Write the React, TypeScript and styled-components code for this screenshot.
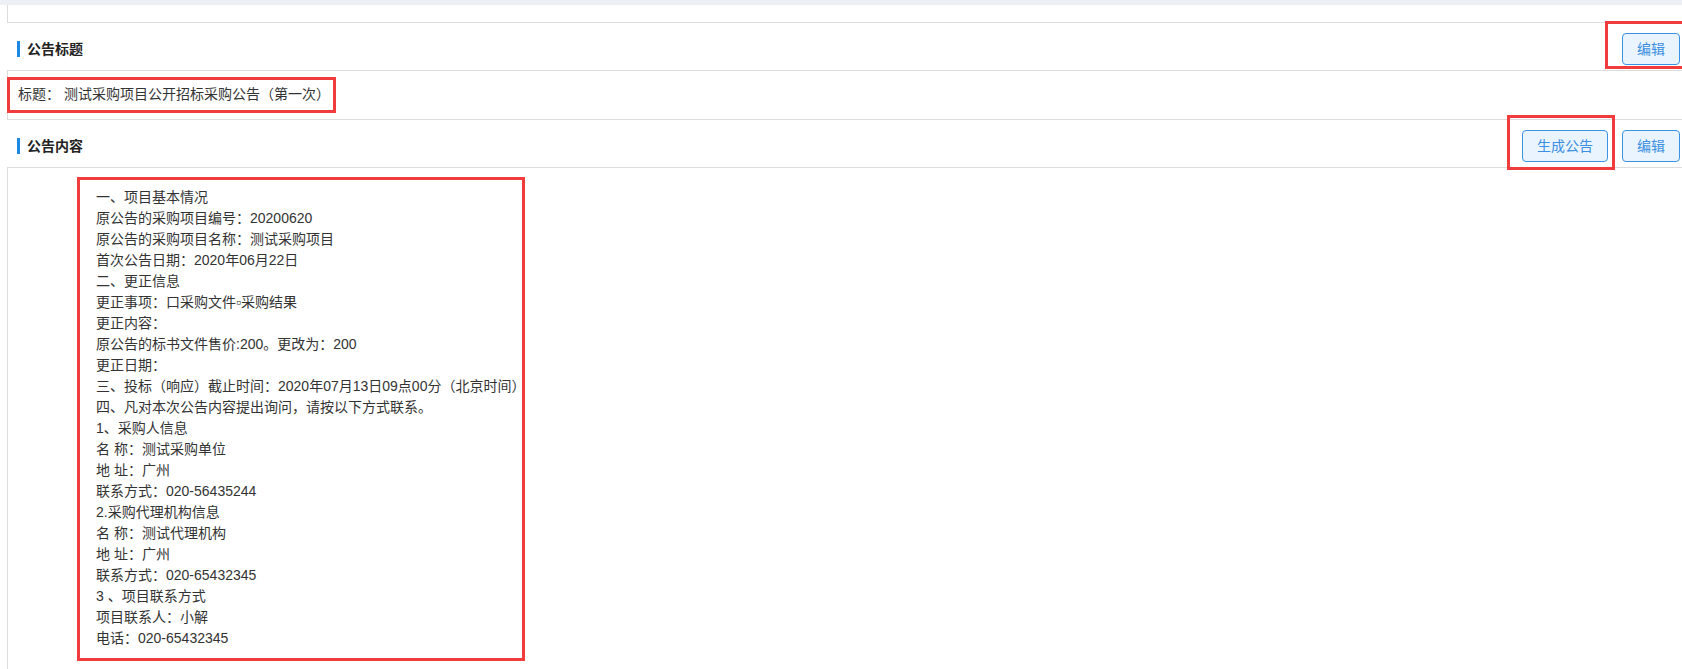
import React from "react";
import styled, { createGlobalStyle } from "styled-components";

const GlobalStyle = createGlobalStyle`
  html, body {
    margin: 0;
    padding: 0;
    background: #fff;
    overflow-x: hidden;
  }
  body {
    font-family: "Liberation Sans", "Noto Sans CJK SC", sans-serif;
    font-size: 14px;
    color: #333;
  }
`;

const TopBand = styled.div`
  height: 5px;
  background: #edf0f4;
`;

const Page = styled.div`
  padding-left: 7px;
`;

const TailBox = styled.div`
  height: 17px;
  border-left: 1px solid #dcdcdc;
  border-bottom: 1px solid #dcdcdc;
`;

const SectionHeader = styled.div`
  height: 47px;
  box-sizing: border-box;
  padding: 5px 2px 0 10px;
  display: flex;
  align-items: center;
`;

const SectionTitle = styled.h3`
  margin: 0;
  flex: 1;
  display: flex;
  align-items: center;
  gap: 7px;
  font-size: 14px;
  font-weight: 700;
  color: #222;
  line-height: 16px;

  &::before {
    content: "";
    width: 3px;
    height: 16px;
    background: #1e88e5;
  }
`;

const Actions = styled.div`
  display: flex;
  gap: 14px;
`;

const Button = styled.button`
  height: 32px;
  box-sizing: border-box;
  padding: 0 14px;
  border: 1px solid #3a92e6;
  border-radius: 4px;
  background: #e9f4fe;
  color: #3b8ee2;
  font-family: inherit;
  font-size: 14px;
  line-height: 30px;
  cursor: pointer;
`;

const Box = styled.div<{ $open?: boolean }>`
  border-top: 1px solid #dcdcdc;
  border-left: 1px solid #dcdcdc;
  border-bottom: ${(p) => (p.$open ? "none" : "1px solid #dcdcdc")};
`;

const TitleBox = styled(Box)`
  padding: 13px 10px 14px;
  line-height: 21px;
`;

const ContentBox = styled(Box)`
  padding: 9px 0 8px 69px;
  min-height: 492px;
  box-sizing: border-box;
`;

const Annotated = styled.span`
  position: relative;
  display: inline-flex;
`;

const Mark = styled.span<{ $t: number; $r: number; $b: number; $l: number }>`
  position: absolute;
  top: ${(p) => -p.$t}px;
  right: ${(p) => -p.$r}px;
  bottom: ${(p) => -p.$b}px;
  left: ${(p) => -p.$l}px;
  border: 3px solid #f03c3c;
  pointer-events: none;
`;

const Notice = styled.div`
  display: inline-block;
  width: 448px;
  box-sizing: border-box;
  border: 3px solid #f03c3c;
  padding: 7px 5px 9px 16px;
  line-height: 21px;
  white-space: nowrap;
`;

const NoticeLine = styled.div`
  height: 21px;
`;

const noticeLines = [
  "一、项目基本情况",
  "原公告的采购项目编号：20200620",
  "原公告的采购项目名称：测试采购项目",
  "首次公告日期：2020年06月22日",
  "二、更正信息",
  "更正事项：口采购文件▫采购结果",
  "更正内容：",
  "原公告的标书文件售价:200。更改为：200",
  "更正日期：",
  "三、投标（响应）截止时间：2020年07月13日09点00分（北京时间）",
  "四、凡对本次公告内容提出询问，请按以下方式联系。",
  "1、采购人信息",
  "名 称：测试采购单位",
  "地 址：广州",
  "联系方式：020-56435244",
  "2.采购代理机构信息",
  "名 称：测试代理机构",
  "地 址：广州",
  "联系方式：020-65432345",
  "3 、项目联系方式",
  "项目联系人：小解",
  "电话：020-65432345",
];

export default function App() {
  return (
    <>
      <GlobalStyle />
      <TopBand />
      <Page>
        <TailBox />

        <SectionHeader>
          <SectionTitle>公告标题</SectionTitle>
          <Actions>
            <Annotated>
              <Button>编辑</Button>
              <Mark $t={12} $r={5} $b={4} $l={17} />
            </Annotated>
          </Actions>
        </SectionHeader>
        <TitleBox>
          <Annotated>
            标题： 测试采购项目公开招标采购公告（第一次）
            <Mark $t={7} $r={6} $b={8} $l={11} />
          </Annotated>
        </TitleBox>

        <SectionHeader>
          <SectionTitle>公告内容</SectionTitle>
          <Actions>
            <Annotated>
              <Button>生成公告</Button>
              <Mark $t={15} $r={7} $b={8} $l={15} />
            </Annotated>
            <Button>编辑</Button>
          </Actions>
        </SectionHeader>
        <ContentBox $open>
          <Notice>
            {noticeLines.map((line, i) => (
              <NoticeLine key={i}>{line}</NoticeLine>
            ))}
          </Notice>
        </ContentBox>
      </Page>
    </>
  );
}
